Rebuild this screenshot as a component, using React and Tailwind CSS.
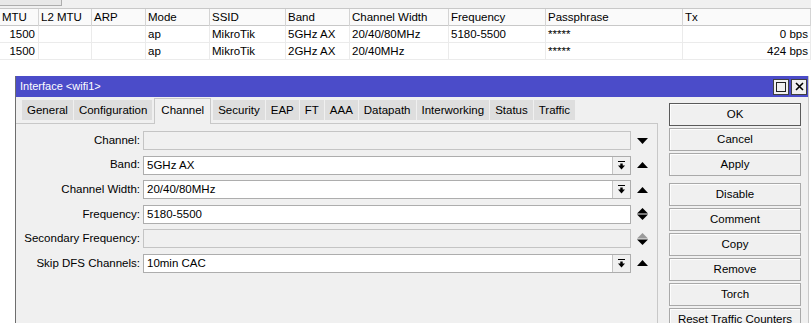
import React from 'react';

const headers = ['MTU', 'L2 MTU', 'ARP', 'Mode', 'SSID', 'Band', 'Channel Width', 'Frequency', 'Passphrase', 'Tx'];
const rows = [
  ['1500', '', '', 'ap', 'MikroTik', '5GHz AX', '20/40/80MHz', '5180-5500', '*****', '0 bps'],
  ['1500', '', '', 'ap', 'MikroTik', '2GHz AX', '20/40MHz', '', '*****', '424 bps'],
];
const gridCols = 'grid grid-cols-[39px_53px_54px_64px_76px_64px_99px_97px_137px_128px]';

const tabs = ['General', 'Configuration', 'Channel', 'Security', 'EAP', 'FT', 'AAA', 'Datapath', 'Interworking', 'Status', 'Traffic'];

const fields = [
  { label: 'Channel', value: '', disabled: true, drop: false, arrow: 'down' },
  { label: 'Band', value: '5GHz AX', drop: true, arrow: 'up' },
  { label: 'Channel Width', value: '20/40/80MHz', drop: true, arrow: 'up' },
  { label: 'Frequency', value: '5180-5500', drop: false, arrow: 'updown' },
  { label: 'Secondary Frequency', value: '', disabled: true, drop: false, arrow: 'updown-dim' },
  { label: 'Skip DFS Channels', value: '10min CAC', drop: true, arrow: 'up' },
];

const buttons = [
  ['OK', 'Cancel', 'Apply'],
  ['Disable', 'Comment', 'Copy', 'Remove', 'Torch', 'Reset Traffic Counters'],
];

const DropIcon = () => (
  <svg width="7" height="9" viewBox="0 0 7 9">
    <rect x="0" y="0" width="7" height="1" fill="#000" />
    <path d="M2.3 2.5h2.4v2H7L3.5 8.5 0 4.5h2.3z" fill="#000" />
  </svg>
);

const Arrow = ({ kind }) => {
  if (kind === 'up')
    return (
      <svg width="11" height="6" viewBox="0 0 11 6">
        <path d="M5.5 0L11 6H0z" fill="#000" />
      </svg>
    );
  if (kind === 'down')
    return (
      <svg width="11" height="6" viewBox="0 0 11 6">
        <path d="M0 0h11L5.5 6z" fill="#000" />
      </svg>
    );
  const dim = kind === 'updown-dim';
  return (
    <svg width="11" height="12" viewBox="0 0 11 12">
      <path d="M5.5 0L11 5.5H0z" fill={dim ? '#9a9a9a' : '#000'} />
      <path d="M0 6.5h11L5.5 12z" fill="#000" />
    </svg>
  );
};

const Field = ({ f }) => (
  <div className="flex items-center h-[19px]">
    <div className="w-[124px] mr-[3px] text-right whitespace-nowrap">{f.label}:</div>
    <div
      className={`w-[488px] h-full flex border ${
        f.disabled ? 'bg-[#f0f0f0] border-[#c4c4c4]' : 'bg-white border-[#adadad]'
      }`}
    >
      <div className="flex-1 pl-[3px] leading-[17px] whitespace-nowrap">{f.value}</div>
      {f.drop && (
        <div className="w-[18px] h-full border-l border-[#c4c4c4] bg-[#f0f0f0] flex items-center justify-center">
          <DropIcon />
        </div>
      )}
    </div>
    <div className="ml-[5px] w-[12px] flex justify-center">
      <Arrow kind={f.arrow} />
    </div>
  </div>
);

const Btn = ({ label, def }) => (
  <div
    className={`h-[23px] border ${
      def ? 'border-[#5a5a5a]' : 'border-[#a9a9a9]'
    } bg-[#f0f0f0] shadow-[inset_1px_1px_0_#fdfdfd] flex items-center justify-center whitespace-nowrap`}
  >
    {label}
  </div>
);

export default function App() {
  return (
    <div className="w-[811px] h-[323px] overflow-hidden bg-white text-black text-[11.5px] font-['Liberation_Sans',Arial,sans-serif]">
      {/* toolbar remnant */}
      <div className="h-[8px] bg-[#f0f0f0] flex">
        <div className="w-[62px] h-[6px] border-r border-b border-[#adadad] bg-[#e8e8e8]" />
      </div>

      {/* list */}
      <div className={`${gridCols} h-[18px] border-t border-b border-[#c8c8c8] bg-[#fafafa]`}>
        {headers.map((h) => (
          <div key={h} className="border-r border-[#d4d4d4] pl-[2px] leading-[17px] whitespace-nowrap">
            {h}
          </div>
        ))}
      </div>
      {rows.map((r, i) => (
        <div key={i} className={`${gridCols} h-[17px] border-b border-[#ebebeb]`}>
          {r.map((c, j) => (
            <div
              key={j}
              className={`border-r border-[#ebebeb] leading-[16px] whitespace-nowrap ${
                j === 0 ? 'text-right pr-[3px]' : j === 9 ? 'text-right pr-[2px]' : 'pl-[2px]'
              }`}
            >
              {c}
            </div>
          ))}
        </div>
      ))}

      {/* dialog window */}
      <div className="mt-[16px] ml-[15px] w-[794px] border-l border-[#6e6e6e] border-r border-r-[#c8c8c8]">
        <div className="h-[21px] bg-[#4b4cc9] flex items-center justify-between pl-[4px] pr-[1px]">
          <span className="text-white text-[11px]">Interface &lt;wifi1&gt;</span>
          <div className="flex gap-[2px]">
            <div className="w-[16px] h-[16px] bg-[#f0f0f0] border border-[#404040] flex items-center justify-center">
              <div className="w-[10px] h-[10px] border border-[#202020]" />
            </div>
            <div className="w-[16px] h-[16px] bg-[#f0f0f0] border border-[#404040] flex items-center justify-center">
              <svg width="9" height="9" viewBox="0 0 9 9">
                <path d="M1 1L8 8M8 1L1 8" stroke="#000" strokeWidth="1.6" />
              </svg>
            </div>
          </div>
        </div>

        <div className="h-[240px] bg-[#f0f0f0] flex">
          <div className="w-[642px]">
            <div className="h-[26px] flex items-start pl-[6px] gap-[1px]">
              {tabs.map((t) =>
                t === 'Channel' ? (
                  <div
                    key={t}
                    className="relative z-10 mt-[1px] h-[26px] px-[6px] mx-[1px] bg-[#f0f0f0] border-x border-t border-[#c8c8c8] leading-[22px]"
                  >
                    {t}
                  </div>
                ) : (
                  <div key={t} className="mt-[3px] h-[20px] px-[5px] bg-[#dedede] leading-[20px]">
                    {t}
                  </div>
                )
              )}
            </div>
            <div className="border-t border-r border-[#c8c8c8] h-[220px] pt-[7px] flex flex-col gap-[5.6px]">
              {fields.map((f) => (
                <Field key={f.label} f={f} />
              ))}
            </div>
          </div>

          <div className="ml-[11px] w-[132px] pt-[6px] flex flex-col">
            <div className="flex flex-col gap-[2px]">
              {buttons[0].map((b) => (
                <Btn key={b} label={b} def={b === 'OK'} />
              ))}
            </div>
            <div className="mt-[7px] flex flex-col gap-[2px]">
              {buttons[1].map((b) => (
                <Btn key={b} label={b} />
              ))}
            </div>
          </div>
        </div>
      </div>
    </div>
  );
}
